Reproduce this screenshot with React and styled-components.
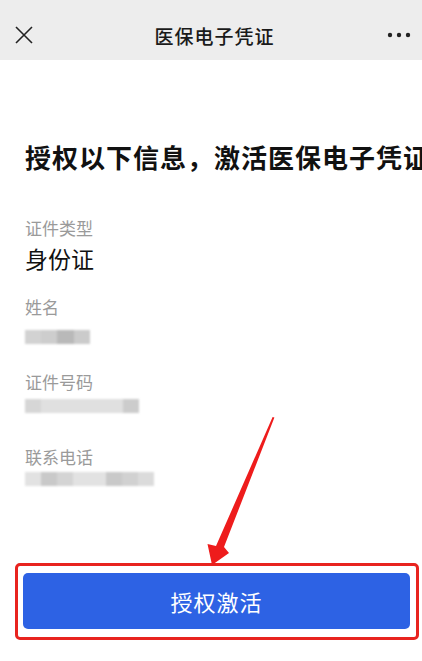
import React from "react";
import styled, { createGlobalStyle } from "styled-components";

const GlobalStyle = createGlobalStyle`
  html, body {
    margin: 0;
    padding: 0;
    background: #ffffff;
  }
  body {
    font-family: "Noto Sans CJK SC", "Noto Sans", sans-serif;
  }
`;

const fields = [
  { label: "证件类型", value: "身份证" },
  {
    label: "姓名",
    blur: [
      { w: 16, c: "#d2d2d2" },
      { w: 16, c: "#cdcdcd" },
      { w: 17, c: "#b9b9b9" },
      { w: 16, c: "#cbcbcb" },
    ],
    offset: 12,
  },
  {
    label: "证件号码",
    blur: [
      { w: 16, c: "#d6d6d6" },
      { w: 82, c: "#e0e0e0" },
      { w: 16, c: "#cccccc" },
    ],
    offset: 6,
  },
  {
    label: "联系电话",
    blur: [
      { w: 16, c: "#e2e2e2" },
      { w: 16, c: "#c9c9c9" },
      { w: 16, c: "#d4d4d4" },
      { w: 33, c: "#e2e2e2" },
      { w: 16, c: "#c9c9c9" },
      { w: 16, c: "#d1d1d1" },
      { w: 16, c: "#dbdbdb" },
    ],
    offset: 4,
  },
];

const App = () => {
  return (
    <Page>
      <GlobalStyle />
      <NavBar>
        <NavIcon>
          <svg width="18" height="18" viewBox="0 0 18 18">
            <path d="M1 1 L17 17 M17 1 L1 17" stroke="#222" strokeWidth="1.6" fill="none" />
          </svg>
        </NavIcon>
        <NavTitle>医保电子凭证</NavTitle>
        <NavIcon>
          <svg width="24" height="6" viewBox="0 0 24 6">
            <circle cx="3" cy="3" r="2.2" fill="#222" />
            <circle cx="12" cy="3" r="2.2" fill="#222" />
            <circle cx="21" cy="3" r="2.2" fill="#222" />
          </svg>
        </NavIcon>
      </NavBar>

      <Content>
        <Heading>授权以下信息，激活医保电子凭证</Heading>
        {fields.map((f, i) => (
          <Field key={f.label} first={i === 0}>
            <Label>{f.label}</Label>
            {f.value ? (
              <Value>{f.value}</Value>
            ) : (
              <BlurRow style={{ paddingTop: f.offset }}>
                {f.blur.map((b, j) => (
                  <BlurCell key={j} style={{ width: b.w, background: b.c }} />
                ))}
              </BlurRow>
            )}
          </Field>
        ))}
      </Content>

      <Highlight>
        <ActivateButton>授权激活</ActivateButton>
      </Highlight>

      <Arrow width="422" height="661" viewBox="0 0 422 661">
        <polygon
          points="272.6,417 274.4,417.6 224,547 229,553 212,565 207.5,544 216,546"
          fill="#ee1c1c"
        />
      </Arrow>
    </Page>
  );
};

export default App;

const Page = styled.div`
  position: relative;
  width: 422px;
  height: 661px;
  display: flex;
  flex-direction: column;
  overflow: hidden;
  background: #ffffff;
`;

const NavBar = styled.div`
  height: 60px;
  box-sizing: border-box;
  padding: 10px 9px 0 10px;
  background: #ededed;
  display: flex;
  align-items: center;
  justify-content: space-between;
`;

const NavIcon = styled.div`
  width: 28px;
  display: flex;
  align-items: center;
  justify-content: center;
`;

const NavTitle = styled.div`
  font-size: 19px;
  font-weight: 500;
  color: #1a1a1a;
  letter-spacing: 1px;
  margin-left: 6px;
`;

const Content = styled.div`
  padding: 0 0 0 25px;
  display: flex;
  flex-direction: column;
`;

const Heading = styled.div`
  margin-top: 79px;
  font-size: 26px;
  line-height: 36px;
  font-weight: 700;
  color: #111;
  white-space: nowrap;
  letter-spacing: 1px;
`;

const Field = styled.div`
  display: flex;
  flex-direction: column;
  margin-top: ${(p) => (p.first ? "42px" : "23px")};
`;

const Label = styled.div`
  font-size: 17px;
  line-height: 22px;
  color: #9a9a9a;
`;

const Value = styled.div`
  margin-top: 4px;
  font-size: 23px;
  line-height: 30px;
  color: #111;
`;

const BlurRow = styled.div`
  height: 30px;
  box-sizing: border-box;
  display: flex;
  align-items: flex-start;
  filter: blur(1.2px);
`;

const BlurCell = styled.div`
  height: 14px;
`;

const Highlight = styled.div`
  margin: auto 0 21px 15px;
  width: 404px;
  box-sizing: border-box;
  border: 3px solid #e8231f;
  border-radius: 5px;
  padding: 7px 6px 8px 5px;
`;

const ActivateButton = styled.button`
  width: 100%;
  height: 56px;
  border: none;
  border-radius: 5px;
  background: #2d62e4;
  color: #ffffff;
  font-family: "Noto Sans CJK SC", "Noto Sans", sans-serif;
  font-size: 22px;
  letter-spacing: 1px;
`;

const Arrow = styled.svg`
  position: absolute;
  left: 0;
  top: 0;
  pointer-events: none;
`;
